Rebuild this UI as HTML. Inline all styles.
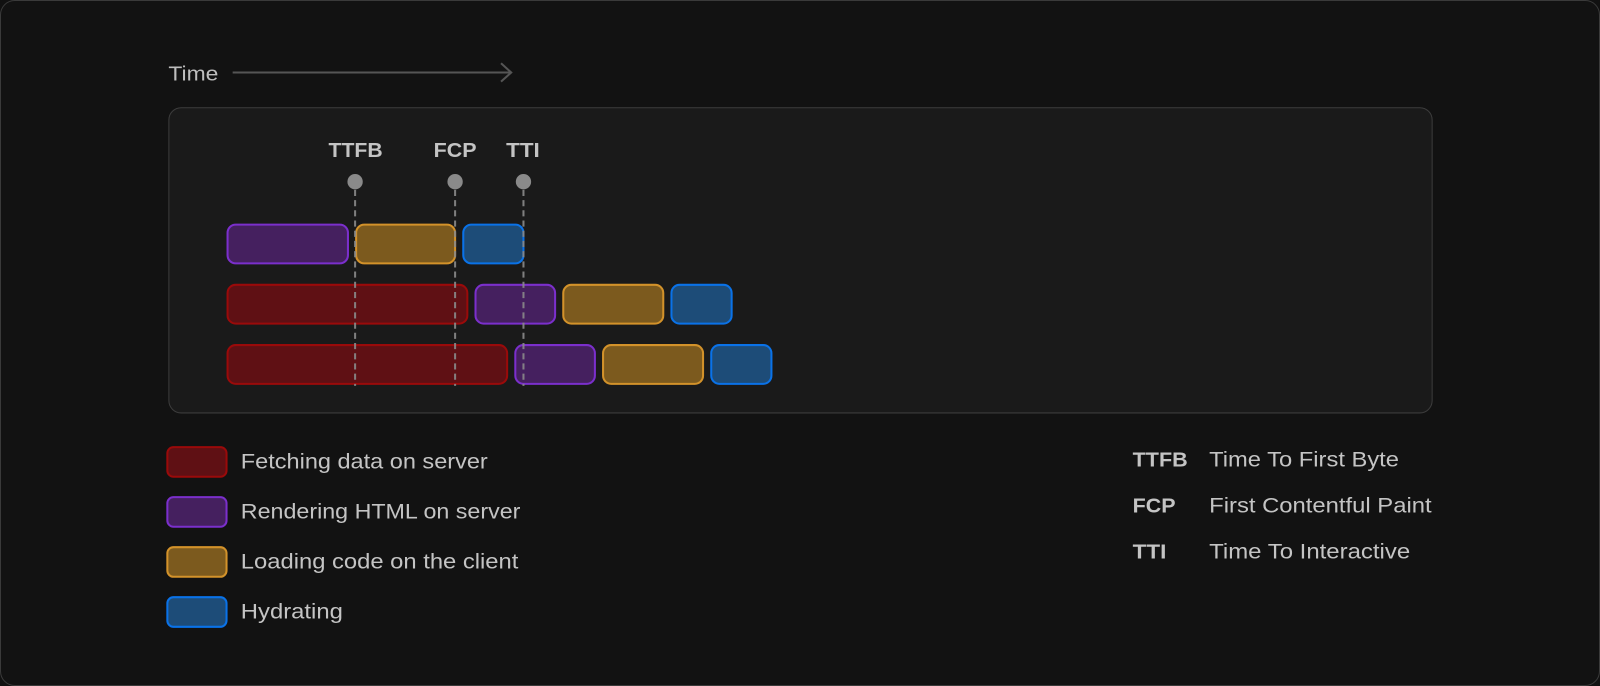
<!DOCTYPE html>
<html><head><style>
html,body{margin:0;padding:0;background:#111;}
svg{display:block}
text{font-family:"Liberation Sans",sans-serif;}
</style></head><body>
<svg width="1600" height="686" viewBox="0 0 1568 672" preserveAspectRatio="none" xmlns="http://www.w3.org/2000/svg">
<rect x="0.5" y="0.5" width="1567" height="671" rx="14" fill="#121212" stroke="#3a3a3a"/>
<text x="165" y="79" font-size="20" fill="#bdbdbd" textLength="49" lengthAdjust="spacingAndGlyphs">Time</text>
<path d="M228 71H501M491 62L501 71L491 80" stroke="#555" stroke-width="2" fill="none"/>
<rect x="165.5" y="105.5" width="1238" height="299" rx="12" fill="#1a1a1a" stroke="#3c3c3c"/>
<g font-size="20" font-weight="bold" fill="#c4c4c4">
<text x="322" y="154" textLength="53" lengthAdjust="spacingAndGlyphs">TTFB</text>
<text x="425" y="154" textLength="42" lengthAdjust="spacingAndGlyphs">FCP</text>
<text x="496" y="154" textLength="33" lengthAdjust="spacingAndGlyphs">TTI</text>
</g>
<g stroke-width="2">
<rect x="223" y="220" width="118" height="38" rx="8" fill="#45205f" stroke="#7b2fcc"/>
<rect x="349" y="220" width="97" height="38" rx="8" fill="#7c5a1e" stroke="#d3922a"/>
<rect x="454" y="220" width="59" height="38" rx="8" fill="#1d4c78" stroke="#0a72e8"/>
<rect x="223" y="279" width="235" height="38" rx="8" fill="#5f1014" stroke="#9a0a0a"/>
<rect x="466" y="279" width="78" height="38" rx="8" fill="#45205f" stroke="#7b2fcc"/>
<rect x="552" y="279" width="98" height="38" rx="8" fill="#7c5a1e" stroke="#d3922a"/>
<rect x="658" y="279" width="59" height="38" rx="8" fill="#1d4c78" stroke="#0a72e8"/>
<rect x="223" y="338" width="274" height="38" rx="8" fill="#5f1014" stroke="#9a0a0a"/>
<rect x="505" y="338" width="78" height="38" rx="8" fill="#45205f" stroke="#7b2fcc"/>
<rect x="591" y="338" width="98" height="38" rx="8" fill="#7c5a1e" stroke="#d3922a"/>
<rect x="697" y="338" width="59" height="38" rx="8" fill="#1d4c78" stroke="#0a72e8"/>
</g>
<g stroke="#8a8a8a" stroke-width="2" stroke-dasharray="6 4" opacity="0.9">
<path d="M348 186V378M446 186V378M513 186V378"/>
</g>
<g fill="#8a8a8a"><circle cx="348" cy="178" r="7.5"/><circle cx="446" cy="178" r="7.5"/><circle cx="513" cy="178" r="7.5"/></g>
<g stroke-width="2">
<rect x="164" y="438" width="58" height="29" rx="6" fill="#5f1014" stroke="#9a0a0a"/>
<rect x="164" y="487" width="58" height="29" rx="6" fill="#45205f" stroke="#7b2fcc"/>
<rect x="164" y="536" width="58" height="29" rx="6" fill="#7c5a1e" stroke="#d3922a"/>
<rect x="164" y="585" width="58" height="29" rx="6" fill="#1d4c78" stroke="#0a72e8"/>
</g>
<g font-size="21" fill="#c4c4c4" lengthAdjust="spacingAndGlyphs">
<text x="236" y="459" textLength="242" lengthAdjust="spacingAndGlyphs">Fetching data on server</text>
<text x="236" y="508" textLength="274" lengthAdjust="spacingAndGlyphs">Rendering HTML on server</text>
<text x="236" y="557" textLength="272" lengthAdjust="spacingAndGlyphs">Loading code on the client</text>
<text x="236" y="606" textLength="100" lengthAdjust="spacingAndGlyphs">Hydrating</text>
<text x="1185" y="457" textLength="186" lengthAdjust="spacingAndGlyphs">Time To First Byte</text>
<text x="1185" y="502" textLength="218" lengthAdjust="spacingAndGlyphs">First Contentful Paint</text>
<text x="1185" y="547" textLength="197" lengthAdjust="spacingAndGlyphs">Time To Interactive</text>
</g>
<g font-size="20" font-weight="bold" fill="#c4c4c4">
<text x="1110" y="457" textLength="54" lengthAdjust="spacingAndGlyphs">TTFB</text>
<text x="1110" y="502" textLength="42" lengthAdjust="spacingAndGlyphs">FCP</text>
<text x="1110" y="547" textLength="33" lengthAdjust="spacingAndGlyphs">TTI</text>
</g>
</svg>
</body></html>
